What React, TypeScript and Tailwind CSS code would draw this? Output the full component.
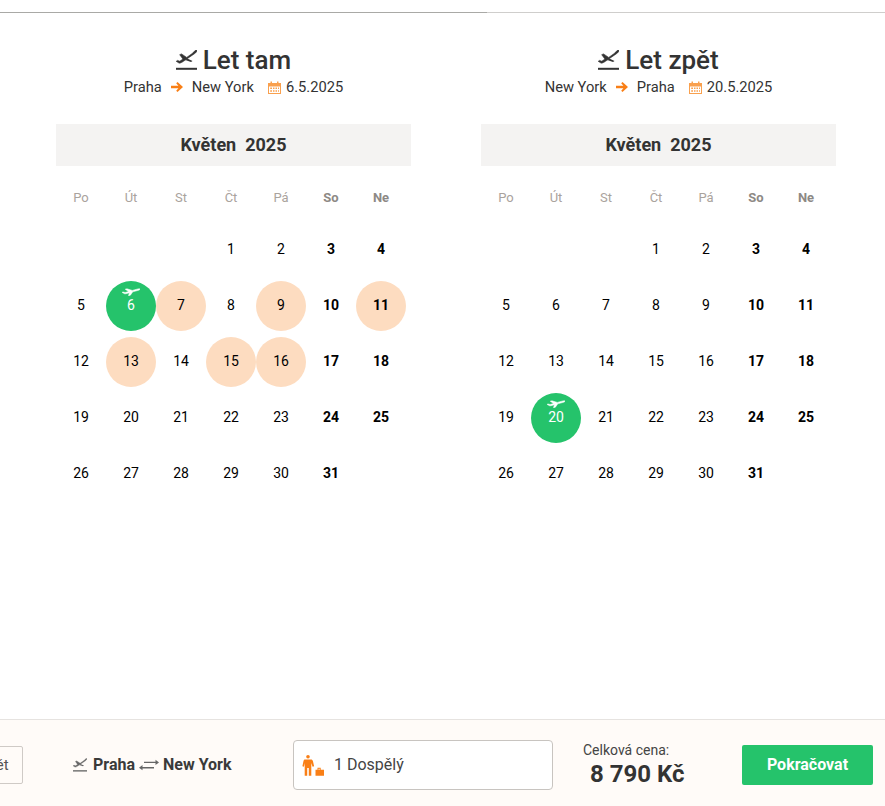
const FONT = "font-['Roboto',sans-serif]";

const dayNames = ["Po", "Út", "St", "Čt", "Pá", "So", "Ne"];

function PlaneUnderlined({ className }: { className?: string }) {
  return (
    <svg viewBox="0 0 21 20" className={className} fill="currentColor">
      <rect x="0" y="17.800" width="21" height="2" />
      <path
        stroke="currentColor"
        strokeWidth="0.6"
        d="M20.800.3c.6.8-.7 2.300-2.300 3.400L7.500 11.300c-1.500 1-3 2-4.500 1.800L.2 11.300l1.300-.9 2.300.8 3.100-2.100-3.200-4.400 1.800-.8 5.200 3.500 5.500-3.900C17.800 2 20 -.6 20.800.3z"
      />
      <path d="M11.300 8.600l5.200 2.300-1.500 1-5.800-2z" />
    </svg>
  );
}

function PlaneSmall({ className }: { className?: string }) {
  return (
    <svg viewBox="0 0 18 8" className={className} fill="currentColor">
      <path
        stroke="currentColor"
        strokeWidth="0.5"
        d="M17.900 1c.2.700-.9 1.200-2.100 1.500L10.800 3.800 8.400 7.200l-1.900.6.900-3-3.300.9c-.8.200-1.500.2-2-.1L0 4.300l1.200-.3 1.900.5 3.500-1L3.200 1.200 5 .8l5.300 1.600 4.500-1.200C16 .8 17.700.3 17.900 1z"
      />
    </svg>
  );
}

function ArrowRight({ className }: { className?: string }) {
  return (
    <svg viewBox="0 0 12 10" className={className} fill="currentColor">
      <path d="M0 3.800h7.400L5.200 1.300 6.500 0 12 5l-5.500 5-1.300-1.300 2.200-2.500H0z" />
    </svg>
  );
}

function CalendarIcon({ className }: { className?: string }) {
  return (
    <svg viewBox="0 0 13 13" className={className} fill="currentColor">
      <path d="M0 2h2.500V.5h1.500V2h5V.5h1.500V2H13v11H0zm1 3.600V12h11V5.600z" />
      <path d="M2.200 6.600h1.800v1.500H2.200zM5 6.600h1.500v1.500H5zM7.500 6.600H9v1.500H7.500zM10 6.600h1v1.500h-1zM2.200 9.200h1.800v1.500H2.200zM5 9.200h1.500v1.500H5zM7.500 9.200H9v1.500H7.500zM10 9.200h1v1.500h-1z" />
    </svg>
  );
}

function SwapArrows({ className }: { className?: string }) {
  return (
    <svg viewBox="0 0 20 12" className={className} fill="currentColor">
      <path d="M5 2.800h11.500V.8L20 3.400l-3.500 2.600V4.100H5z" />
      <path d="M15 8.100H3.500V6.100L0 8.700l3.500 2.600V9.400H15z" />
    </svg>
  );
}

function PersonLuggage({ className }: { className?: string }) {
  return (
    <svg viewBox="0 0 22 21" className={className} fill="currentColor">
      <circle cx="6" cy="1.800" r="1.800" />
      <path d="M3 4.400h6c1 0 1.600.6 1.900 1.500l1.200 5.400-1.500.4L9.300 8v12.800H6.800V13H5.200v7.800H2.700V8L1.900 11.700.4 11.300l1.100-5.400c.2-.9.600-1.500 1.500-1.500z" />
      <path d="M13.500 14.800h2v-2h3.200v2H22v6h-8.500zm3 0h1.200v-1h-1.200z" />
    </svg>
  );
}

function DayCell({ day, weekend, tone }: { day: number; weekend: boolean; tone?: "selected" | "available" }) {
  if (tone === "selected") {
    return (
      <div className="relative flex h-[50px] w-[50px] items-center justify-center rounded-full bg-[#25c36b] pb-[2px] text-white">
        <PlaneSmall className="absolute left-[16px] top-[7px] h-[8px] w-[18px]" />
        <span>{day}</span>
      </div>
    );
  }
  return (
    <div
      className={`flex h-[50px] w-[50px] items-center justify-center rounded-full pb-[2px] text-black ${
        tone === "available" ? "bg-[#fddcc0]" : ""
      } ${weekend ? "font-bold" : ""}`}
    >
      {day}
    </div>
  );
}

function Month({
  title,
  from,
  to,
  date,
  selected,
  available,
}: {
  title: string;
  from: string;
  to: string;
  date: string;
  selected: number;
  available: number[];
}) {
  const days: (number | null)[] = [null, null, null];
  for (let d = 1; d <= 31; d++) days.push(d);

  return (
    <div className="w-[355px]">
      <h2 className="flex h-[32px] items-center justify-center gap-[6px] text-[26px] font-medium leading-[32px] text-[#333]">
        <PlaneUnderlined className="h-[20px] w-[21px]" />
        {title}
      </h2>
      <div className="mt-[1px] flex h-[20px] items-center justify-center text-[14.7px] leading-[20px] text-[#333]">
        <span>{from}</span>
        <ArrowRight className="mx-[9px] h-[10px] w-[12px] text-[#f97f16]" />
        <span>{to}</span>
        <CalendarIcon className="ml-[14px] mr-[5px] h-[13px] w-[13px] text-[#f9a04e]" />
        <span>{date}</span>
      </div>
      <div className="mt-[27px] flex h-[42px] items-center justify-center bg-[#f4f3f2] pb-[2px] text-[18px] font-bold whitespace-pre text-[#333]">
        Květen  2025
      </div>
      <div className="mt-[22px] grid w-[350px] grid-cols-[repeat(7,50px)] text-center text-[13px] leading-[20px] text-[#aaa39d]">
        {dayNames.map((name, i) => (
          <div key={name} className={i > 4 ? "font-bold text-[#8d8985]" : ""}>
            {name}
          </div>
        ))}
      </div>
      <div className="mt-[14px] grid w-[350px] grid-cols-[repeat(7,50px)] auto-rows-[56px] text-[14px]">
        {days.map((d, i) => (
          <div key={i} className="flex items-center justify-center">
            {d !== null && (
              <DayCell
                day={d}
                weekend={i % 7 > 4}
                tone={d === selected ? "selected" : available.includes(d) ? "available" : undefined}
              />
            )}
          </div>
        ))}
      </div>
    </div>
  );
}

export default function App() {
  return (
    <div className={`flex h-[806px] w-[885px] flex-col overflow-hidden bg-white ${FONT}`}>
      <div className="mt-[12px] h-[1px] w-full bg-gradient-to-r from-[#a9a9a6] from-55% to-[#cfcecc] to-55%" />
      <main className="flex flex-1 gap-[70px] pl-[56px] pt-[31px]">
        <Month title="Let tam" from="Praha" to="New York" date="6.5.2025" selected={6} available={[7, 9, 11, 13, 15, 16]} />
        <Month title="Let zpět" from="New York" to="Praha" date="20.5.2025" selected={20} available={[]} />
      </main>
      <footer className="flex h-[87px] items-center border-t border-[#e6e3e0] bg-[#fffbf8] pt-[4px]">
        <button className="ml-[-36px] flex h-[38px] w-[59px] shrink-0 items-center justify-center rounded-[2px] border border-[#cfcac6] text-[15px] text-[#555]">
          Zpět
        </button>
        <div className="ml-[50px] flex w-[220px] shrink-0 items-center text-[16px] font-bold text-[#3a3a3a]">
          <PlaneUnderlined className="mr-[6px] h-[14px] w-[14px] text-[#666]" />
          Praha
          <SwapArrows className="mx-[4px] h-[12px] w-[20px] text-[#666]" />
          New York
        </div>
        <div className="flex h-[50px] w-[260px] shrink-0 items-center rounded-[4px] border border-[#c8c4c0] bg-white pl-[8px] text-[16px] text-[#444]">
          <PersonLuggage className="h-[21px] w-[22px] text-[#f97f16]" />
          <span className="ml-[10px]">1 Dospělý</span>
        </div>
        <div className="ml-[30px] w-[159px] shrink-0">
          <div className="text-[14px] leading-[18px] text-[#444]">Celková cena:</div>
          <div className="pl-[7px] text-[24px] leading-[30px] font-bold text-[#333]">8 790 Kč</div>
        </div>
        <button className="flex h-[40px] w-[131px] shrink-0 items-center justify-center rounded-[2px] bg-[#25c36b] text-[16px] font-bold text-white">
          Pokračovat
        </button>
      </footer>
    </div>
  );
}
